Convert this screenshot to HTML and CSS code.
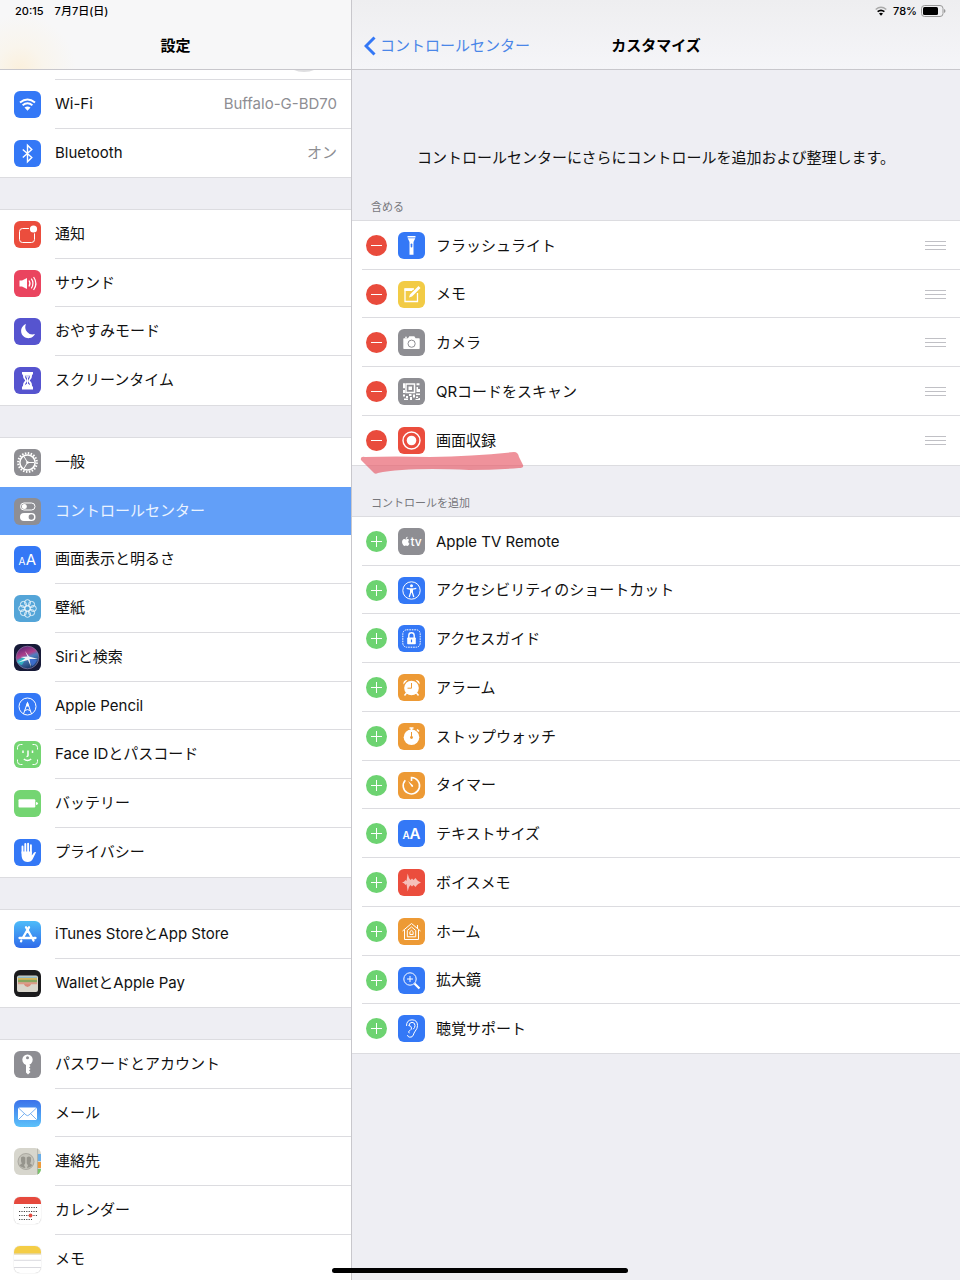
FILE: index.html
```html
<!DOCTYPE html>
<html lang="ja">
<head>
<meta charset="utf-8">
<meta name="viewport" content="width=device-width, initial-scale=1">
<title>設定</title>
<link rel="stylesheet" href="styles.css">
</head>
<body>
<div class="app">
  <div class="pane sidebar">
    <header class="bar bar-side">
      <div class="status"><span>20:15</span><span>7月7日(日)</span></div>
      <h1 class="bar-title">設定</h1>
    </header>
    <nav class="scroll" aria-label="設定">
      <div class="profile"><div class="profile-edge"><svg class="avatar-edge" viewBox="0 0 22 2" aria-hidden="true"><path d="M1 0h20q-4 2-10 2T1 0z"/></svg></div></div>
      <ul class="group first">
        <li class="row"><a class="link" href="#wifi"><svg class="icon blue" viewBox="0 0 27 27"><g class="ln w2"><path d="M6 11.500q7.500-6 15 0M8.600 14.200q4.900-3.800 9.800 0"/></g><path class="w" d="M10.500 16.500q3-2.200 6 0l-3 3.200z"/></svg><span class="body"><span>Wi-Fi</span><span class="value">Buffalo-G-BD70</span></span></a></li>
        <li class="row"><a class="link" href="#bluetooth"><svg class="icon blue" viewBox="0 0 27 27"><path class="ln" stroke-width="1.400" d="M8.800 9.500l9 8-4.300 4.300V5.200l4.300 4.300-9 8"/></svg><span class="body"><span>Bluetooth</span><span class="value">オン</span></span></a></li>
      </ul>
      <ul class="group">
        <li class="row"><a class="link" href="#notice"><svg class="icon red" viewBox="0 0 27 27"><rect class="ln" x="5.500" y="7.500" width="15" height="14" rx="3"/><circle cx="19.500" cy="8" r="4.600" fill="#eb4d3d"/><circle class="w" cx="19.500" cy="8" r="3.600"/></svg><span class="body">通知</span></a></li>
        <li class="row"><a class="link" href="#sound"><svg class="icon pink" viewBox="0 0 27 27"><path class="w" d="M5.500 10.500H8L13 8v11l-5-2.500H5.500z"/><path class="ln" stroke-width="1.200" d="M15 10.500q2 3 0 6M17.300 8.700q3.400 4.800 0 9.600M19.600 7q4.600 6.500 0 13"/></svg><span class="body">サウンド</span></a></li>
        <li class="row"><a class="link" href="#dnd"><svg class="icon violet" viewBox="0 0 27 27"><path class="w" d="M12 6a7.300 7.300 0 1 0 9 10A7.300 7.300 0 0 1 12 6z"/></svg><span class="body">おやすみモード</span></a></li>
        <li class="row"><a class="link" href="#screentime"><svg class="icon violet" viewBox="0 0 27 27"><path class="w" d="M8 5h11v2.500h-.800q0 4-2.400 6 2.400 2 2.400 6h.800V22.500H8v-3h.800q0-4 2.400-6-2.400-2-2.400-6H8z"/><path d="M10.800 8.700h5.400q-.300 2.800-2 4.500v1.500q1.500 1 2 3.500l-2-1.500h-1.400l-2 1.500q.500-2.500 2-3.500v-1.500q-1.700-1.700-2-4.500z" fill="#5654cf"/><path d="M11.300 9.200h4.400q-.500 1.300-2.200 1.800-1.700-.500-2.200-1.800zM13 11h1v7h-1z" class="w"/></svg><span class="body">スクリーンタイム</span></a></li>
      </ul>
      <ul class="group">
        <li class="row before-selected"><a class="link" href="#general"><svg class="icon gray" viewBox="0 0 27 27"><circle class="ln" cx="13.500" cy="13.500" r="9.300" stroke-width="2.200" stroke-dasharray="1.500 1.420"/><circle class="ln" cx="13.500" cy="13.500" r="7.600" stroke-width="1.500"/><path class="ln" d="M13.500 13.500H20M13.500 13.500L10 7.500M13.500 13.500L10 19.500"/><circle class="w" cx="13.500" cy="13.500" r="1.300"/></svg><span class="body">一般</span></a></li>
        <li class="row selected"><a class="link" href="#control" aria-current="page"><svg class="icon gray" viewBox="0 0 27 27"><rect class="ln" x="6.500" y="5" width="14.500" height="7" rx="3.500"/><circle class="w" cx="10.300" cy="8.500" r="2.500"/><rect class="w" x="6" y="15" width="15.500" height="8" rx="4"/><circle cx="17.300" cy="19" r="2.700" fill="#8e8e93"/></svg><span class="body">コントロールセンター</span></a></li>
        <li class="row"><a class="link" href="#display"><svg class="icon blue" viewBox="0 0 27 27"><text x="4.500" y="18.500" class="glyph-s">A</text><text x="11.800" y="18.500" class="glyph-l">A</text></svg><span class="body">画面表示と明るさ</span></a></li>
        <li class="row"><a class="link" href="#wallpaper"><svg class="icon sky" viewBox="0 0 27 27"><g class="ln thin"><circle cx="13.500" cy="13.500" r="2.600"/><circle cx="13.500" cy="7.700" r="3"/><circle cx="17.600" cy="9.400" r="3"/><circle cx="19.300" cy="13.500" r="3"/><circle cx="17.600" cy="17.600" r="3"/><circle cx="13.500" cy="19.300" r="3"/><circle cx="9.400" cy="17.600" r="3"/><circle cx="7.700" cy="13.500" r="3"/><circle cx="9.400" cy="9.400" r="3"/></g></svg><span class="body">壁紙</span></a></li>
        <li class="row"><a class="link" href="#siri"><svg class="icon siri" viewBox="0 0 27 27"><defs><linearGradient id="orb" x1="0.300" y1="0" x2="0.700" y2="1"><stop offset="0" stop-color="#5b2577"/><stop offset="0.350" stop-color="#b0408c"/><stop offset="0.500" stop-color="#4f7fc0"/><stop offset="1" stop-color="#15325e"/></linearGradient></defs><circle cx="13.500" cy="13.500" r="11.300" fill="url(#orb)" stroke="#8d7ba8" stroke-width=".7"/><path d="M3 17q5-4 10-4l-5 8q-4-1-5-4z" fill="#2cc0c6" opacity=".8"/><path d="M14 14l9 2q-2 5-5 6z" fill="#3f72d8" opacity=".8"/><path d="M13.500 12.500L11 7l4 5.500 9 2.500-8.500 0 1.500 8-3-7-10 2.500 7.500-4-5-1.500z" fill="#fff" opacity=".9"/></svg><span class="body">Siriと検索</span></a></li>
        <li class="row"><a class="link" href="#pencil"><svg class="icon blue" viewBox="0 0 27 27"><circle class="ln" cx="13.500" cy="13.500" r="8.500"/><path class="ln" d="M9.500 21l4-11.500 4 11.500M10.800 17.500q2.700-1.800 5.400 0"/><path class="w" d="M13.500 8.500l1.800 5h-3.600z"/></svg><span class="body">Apple Pencil</span></a></li>
        <li class="row"><a class="link" href="#faceid"><svg class="icon green" viewBox="0 0 27 27"><g class="ln"><path d="M3.500 8.500V6.500a3 3 0 0 1 3-3h2M18.500 3.500h2a3 3 0 0 1 3 3v2M23.500 18.500v2a3 3 0 0 1-3 3h-2M8.500 23.500h-2a3 3 0 0 1-3-3v-2"/><path d="M9 9.500V12M18.500 9.500V12M14 9.500v5q0 1-1.500 1M9.800 18q3.700 3 7.400 0" stroke-width="1.500"/></g></svg><span class="body">Face IDとパスコード</span></a></li>
        <li class="row"><a class="link" href="#battery"><svg class="icon green" viewBox="0 0 27 27"><rect class="w" x="4.500" y="9.300" width="16.800" height="8.200" rx="1"/><path class="w" d="M22 12q2 .300 2 1.500T22 15z"/></svg><span class="body">バッテリー</span></a></li>
        <li class="row"><a class="link" href="#privacy"><svg class="icon blue" viewBox="0 0 27 27"><g class="ln round" stroke-width="1.900"><path d="M8.500 14V7.500M11.300 13V5M14.100 13V4.600M16.900 14V6.300"/></g><path class="w" d="M7.550 12.500h10.300v4l2-2.800q1-1 2.200-.4l-3.300 6.700q-1.500 3-5 3-4 0-5.400-3-.800-2-.800-4z"/></svg><span class="body">プライバシー</span></a></li>
      </ul>
      <ul class="group">
        <li class="row"><a class="link" href="#store"><svg class="icon store" viewBox="0 0 27 27"><path class="ln round" stroke-width="2.300" d="M12 6.300l7.500 13.200M15 6.300L9 16.500M5.500 17h11M20 17h1.500M7.300 19.800l-.300.500"/></svg><span class="body">iTunes StoreとApp Store</span></a></li>
        <li class="row"><a class="link" href="#wallet"><svg class="icon black" viewBox="0 0 27 27"><rect x="3" y="5.500" width="21" height="16.500" rx="2" fill="#d9d6cc"/><path d="M4 6.500h19v2H4z" fill="#8fb9c4"/><path d="M4 8h19v3H4z" fill="#d8b458"/><path d="M4 9.800h19v3H4z" fill="#86a660"/><path d="M4 12.200h19v3H4z" fill="#dd9b88"/><path d="M4 14.200h6q1 2.800 3.500 2.800t3.500-2.800h6V21H4z" fill="#d9d6cc"/><path d="M10 14.200h7q-1 2.800-3.500 2.800T10 14.200z" fill="#d98a7a"/></svg><span class="body">WalletとApple Pay</span></a></li>
      </ul>
      <ul class="group">
        <li class="row"><a class="link" href="#passwords"><svg class="icon gray" viewBox="0 0 27 27"><circle class="w" cx="13.500" cy="8.700" r="5.200"/><path class="w" d="M12 12h3v1.500l1.500 1.500-1.500 1.500 1.500 1.500-1.500 1.500 1.500 1.500-2.500 2.500-2-2z"/><circle cx="13.500" cy="6.800" r="1.500" fill="#8e8e93"/></svg><span class="body">パスワードとアカウント</span></a></li>
        <li class="row"><a class="link" href="#mail"><svg class="icon mail" viewBox="0 0 27 27"><rect class="w" x="4" y="7.500" width="19" height="12.500" rx="1.500"/><path d="M4.500 8l7.500 7q1.500 1.300 3 0l7.500-7M4.500 19.500l6-6M22.500 19.500l-6-6" fill="none" stroke="#5b9fee" stroke-width=".8"/></svg><span class="body">メール</span></a></li>
        <li class="row"><a class="link" href="#contacts"><svg class="icon contacts" viewBox="0 0 27 27"><path d="M23.500 6H27v7h-3.500z" fill="#6aaee8"/><path d="M23.500 14H27v6h-3.500z" fill="#ee9a3a"/><path d="M23.500 21H27v6h-3.500z" fill="#76c567"/><path d="M23.600 0v27" stroke="#a9a9a0" stroke-width=".8"/><circle cx="12" cy="13.500" r="8" fill="#c5c4bb" stroke="#a1a098" stroke-width=".8"/><path d="M7 9.500q2-1.800 4.300 0v5.500q-.500 1.500-1.300 2l1.500 3Q7 19.500 5.500 17l2.300-1.200Q6.600 13 7 9.500zM12.700 9.500q2.300-1.800 4.300 0 .400 3.500-.800 6.300l2.300 1.200q-1.500 2.500-5.500 3l1-3q-1.300-.500-1.300-2z" fill="#96958d"/></svg><span class="body">連絡先</span></a></li>
        <li class="row"><a class="link" href="#calendar"><svg class="icon paper" viewBox="0 0 27 27"><path d="M0 0h27v7H0z" fill="#e6493d"/><g fill="none" stroke="#444" stroke-width="1" stroke-dasharray="1.200 1.200"><path d="M10 10.500h13M5 14.500h18M5 18.500h18M5 22.500h13"/></g><circle cx="16.500" cy="18.500" r="1.900" fill="#e6493d"/></svg><span class="body">カレンダー</span></a></li>
        <li class="row"><a class="link" href="#notes"><svg class="icon paper" viewBox="0 0 27 27"><path d="M0 0h27v7.500H0z" fill="#f4cd46"/><path d="M0 8h27" stroke="#cdb878" stroke-width=".8"/><path d="M0 14.300h27M0 21.500h27" stroke="#cfcfd6" stroke-width=".8"/></svg><span class="body">メモ</span></a></li>
      </ul>
    </nav>
  </div>

  <main class="pane detail">
    <header class="bar bar-main">
      <div class="status status-end">
        <svg class="st-wifi" viewBox="0 0 12 10" aria-label="Wi-Fi"><path d="M.700 3.500q5.300-4.500 10.600 0" fill="none" stroke="#aaa" stroke-width="1.500"/><path d="M2.600 5.700q3.400-2.800 6.800 0" fill="none" stroke="#000" stroke-width="1.600"/><path d="M4 7.500q2-1.500 4 0L6 9.700z"/></svg>
        <span>78%</span>
        <svg class="st-battery" viewBox="0 0 25 12" aria-label="バッテリー"><rect x=".500" y=".500" width="21.500" height="11" rx="3" fill="none" stroke="#999"/><rect x="2" y="2" width="15" height="8" rx="1.500"/><path d="M23 4q1.500.500 1.500 2T23 8z" fill="#999"/></svg>
      </div>
      <div class="nav">
        <a class="back" href="#control"><svg class="chevron" viewBox="0 0 12 20" aria-hidden="true"><path d="M10.500 1.500L2 10l8.500 8.500"/></svg>コントロールセンター</a>
        <h2 class="bar-title">カスタマイズ</h2>
      </div>
    </header>
    <div class="scroll">
      <p class="intro">コントロールセンターにさらにコントロールを追加および整理します。</p>
      <h3 class="label">含める</h3>
      <ul class="group controls">
        <li class="row"><button class="dot remove" aria-label="フラッシュライトを削除"></button><svg class="icon blue" viewBox="0 0 27 27"><path class="w" d="M9.500 4h8v1.500h-8zM9.700 6.300h7.600L15.500 10v12.800h-4V10z"/><rect x="12.700" y="11.500" width="1.600" height="4" rx=".8" fill="#3478f6"/></svg><span class="body">フラッシュライト</span><button class="grip" aria-label="並べ替え"></button></li>
        <li class="row"><button class="dot remove" aria-label="メモを削除"></button><svg class="icon yellow" viewBox="0 0 27 27"><path class="ln" stroke-width="1.300" d="M16 8H7v12.500h12.500V12"/><path class="w" d="M6.500 7.500h9l-1.500 2.500h-7.500zM20.500 5l2 2-8.500 8.500-3 1 1-3z"/></svg><span class="body">メモ</span><button class="grip" aria-label="並べ替え"></button></li>
        <li class="row"><button class="dot remove" aria-label="カメラを削除"></button><svg class="icon gray" viewBox="0 0 27 27"><path class="w" d="M6 9.300h4l1.300-2h5l1.300 2H21q.7 0 .7.700v9.200q0 .8-.7.800H6q-.7 0-.7-.8V10q0-.7.700-.7zM7 7.800h2v1H7z"/><circle cx="13.600" cy="14.700" r="3.600" fill="none" stroke="#8e8e93"/></svg><span class="body">カメラ</span><button class="grip" aria-label="並べ替え"></button></li>
        <li class="row"><button class="dot remove" aria-label="QRコードをスキャンを削除"></button><svg class="icon gray" viewBox="0 0 27 27"><g class="ln" stroke-width="1.500"><path d="M8 6h8.500v8.500H8z"/></g><path class="w" d="M10.500 8.500h3.500v3.500h-3.500zM5 5.200h2v5H5zM5 12h2v3H5zM18.500 5.200h3v2h-3zM18.500 9h1.500v2h2v3h-3.500zM5 16.500h2v2H5zM8 18h2v2H8zM6 20.500h4V22H6zM11 16h2.500v2H11zM12 19h2v3h-2zM15 16.500h2v3h-2zM18 15.500h4V17h-4zM18 18.500h2v1.500h-2zM20.500 20H22v2h-4.500v-1h3z"/></svg><span class="body">QRコードをスキャン</span><button class="grip" aria-label="並べ替え"></button></li>
        <li class="row marked"><button class="dot remove" aria-label="画面収録を削除"></button><svg class="icon red" viewBox="0 0 27 27"><circle class="ln" cx="13.500" cy="13.500" r="8.500" stroke-width="1.400"/><circle class="w" cx="13.500" cy="13.500" r="4.800"/></svg><span class="body">画面収録</span><button class="grip" aria-label="並べ替え"></button>
          <svg class="marker" viewBox="0 0 164 22" aria-hidden="true"><path d="M1 8Q0 4 5 5q30-1 65 0 45-1 84-5 4 0 5 5l4 8q1 3-4 3-25 2-50 2-40-2-67 0-15 1-24 3-3 2-5-1z"/></svg></li>
      </ul>
      <h3 class="label">コントロールを追加</h3>
      <ul class="group controls">
        <li class="row"><button class="dot add" aria-label="Apple TV Remoteを追加"></button><svg class="icon gray" viewBox="0 0 27 27"><path class="w" transform="translate(3.200 8.800) scale(.38)" d="M12.152 6.896c-.948 0-2.415-1.078-3.960-1.040-2.040.027-3.910 1.183-4.961 3.014-2.117 3.675-.546 9.103 1.519 12.090 1.013 1.454 2.208 3.090 3.792 3.039 1.520-.065 2.090-.987 3.935-.987 1.831 0 2.350.987 3.960.948 1.637-.026 2.676-1.480 3.676-2.948 1.156-1.688 1.636-3.325 1.662-3.415-.039-.013-3.182-1.221-3.220-4.857-.026-3.040 2.480-4.494 2.597-4.559-1.429-2.090-3.623-2.324-4.390-2.376-2-.156-3.675 1.090-4.610 1.090zM15.530 3.830c.843-1.012 1.400-2.427 1.245-3.830-1.207.052-2.662.805-3.532 1.818-.780.896-1.454 2.338-1.273 3.714 1.338.104 2.715-.688 3.559-1.701"/><text class="glyph-tv" x="12.500" y="17.800">tv</text></svg><span class="body">Apple TV Remote</span></li>
        <li class="row"><button class="dot add" aria-label="アクセシビリティのショートカットを追加"></button><svg class="icon blue" viewBox="0 0 27 27"><circle class="ln" cx="13.500" cy="13.500" r="8.700"/><circle class="w" cx="13.500" cy="8.700" r="1.500"/><path class="ln" stroke-width="1.300" d="M8.700 11.300l3.500.8h2.600l3.500-.8M12.700 12v3.500L11.200 20M14.300 12v3.500L15.800 20"/><path class="w" d="M12.100 11.500h2.800v4h-2.800z"/></svg><span class="body">アクセシビリティのショートカット</span></li>
        <li class="row"><button class="dot add" aria-label="アクセスガイドを追加"></button><svg class="icon blue" viewBox="0 0 27 27"><rect class="ln" x="4.800" y="4.800" width="17.400" height="17.400" rx="4" stroke-dasharray="1.600 .9"/><path class="ln" stroke-width="1.400" d="M10.800 13v-2.500a2.700 2.700 0 0 1 5.400 0V13"/><rect class="w" x="9.200" y="12.500" width="8.600" height="6.800" rx=".8"/><path d="M13.500 14.500v2.800" stroke="#3478f6" stroke-width="1.200"/></svg><span class="body">アクセスガイド</span></li>
        <li class="row"><button class="dot add" aria-label="アラームを追加"></button><svg class="icon orange" viewBox="0 0 27 27"><circle class="w" cx="13.500" cy="14" r="7.300"/><path class="w" d="M5.500 10.500q-1-4 4-4.700zM21.500 10.500q1-4-4-4.700z"/><path class="ln" stroke-width="1.500" d="M8.500 19l-2 2.500M18.500 19l2 2.500"/><path d="M13.500 9v5.200h-4" fill="none" stroke="#ed9a35"/></svg><span class="body">アラーム</span></li>
        <li class="row"><button class="dot add" aria-label="ストップウォッチを追加"></button><svg class="icon orange" viewBox="0 0 27 27"><circle class="w" cx="13.500" cy="14.300" r="7.800"/><path class="ln" stroke-width="1.700" d="M11.500 5h4M13.500 5v3M19 6.500l2 2"/><path d="M13.500 9v5" stroke="#ed9a35"/><circle cx="13.500" cy="14.500" r="1.400" fill="#ed9a35"/></svg><span class="body">ストップウォッチ</span></li>
        <li class="row"><button class="dot add" aria-label="タイマーを追加"></button><svg class="icon orange" viewBox="0 0 27 27"><path class="ln" stroke-width="1.600" d="M13.500 9V5.500A8.200 8.200 0 1 1 7.300 8.200"/><path class="w" d="M10 9l5 4.300q.7 1.500-.7 1.700-.7 0-1-.7z"/></svg><span class="body">タイマー</span></li>
        <li class="row"><button class="dot add" aria-label="テキストサイズを追加"></button><svg class="icon blue" viewBox="0 0 27 27"><text x="4.500" y="19" class="glyph-s bold">A</text><text x="11.500" y="19" class="glyph-l bold">A</text></svg><span class="body">テキストサイズ</span></li>
        <li class="row"><button class="dot add" aria-label="ボイスメモを追加"></button><svg class="icon red" viewBox="0 0 27 27"><path d="M4 13.500l2-.8 1.500-1.700 1 1 1.200-7.500 1.300 4.500 1.500 2 1.500-1.500 1.500 1.500 2-2 1.500 2 1.500 1.300 2.500 1.200-2.500 1.200-1.500 1.300-1.500 2-2-2-1.500 1.500-1.500-1.500-1.500 2-1.300 4.500-1.200-7.500-1 1-1.500-1.700z" fill="#f5c0ba"/></svg><span class="body">ボイスメモ</span></li>
        <li class="row"><button class="dot add" aria-label="ホームを追加"></button><svg class="icon orange" viewBox="0 0 27 27"><g class="ln"><path d="M4.500 13l9-7.500 9 7.500M19.500 10V7M6.500 12v9.500h14V12"/><path d="M9.300 18.800v-6.300l4.200-3.500 4.200 3.500v6.300z"/><path d="M11.900 16.500v-2.800l1.600-1.400 1.600 1.400v2.800z"/></g></svg><span class="body">ホーム</span></li>
        <li class="row"><button class="dot add" aria-label="拡大鏡を追加"></button><svg class="icon blue" viewBox="0 0 27 27"><circle class="ln" cx="12" cy="12" r="6.200"/><path class="ln" d="M12 9v6M9 12h6"/><path class="ln" stroke-width="2.200" d="M16.500 16.500l5 5"/></svg><span class="body">拡大鏡</span></li>
        <li class="row"><button class="dot add" aria-label="聴覚サポートを追加"></button><svg class="icon blue" viewBox="0 0 27 27"><path class="ln round" d="M8.500 10.500Q8.500 5 14 4.800q5.500.2 5.500 5.700 0 3-2.200 5.500-1.500 2-2 4-.8 2.500-3.500 2.200-2-.2-2.300-1.700M11 10.500q0-3 3-3.200 3 .2 3 3.200 0 2-1.500 3.500M11 10.500q2.500.5 2.500 2.500 0 1.500-1.500 2.500-2.500.8-1 2.500"/></svg><span class="body">聴覚サポート</span></li>
      </ul>
    </div>
  </main>
</div>
<div class="home-indicator"></div>
</body>
</html>
```
FILE: styles.css
```css
* { box-sizing: border-box; }

body {
  margin: 0;
  background: #eeeef3;
  color: #111;
  font: 15px/22px Inter, "Noto Sans CJK JP", sans-serif;
}

h1, h2, h3, p, ul { margin: 0; padding: 0; }
ul { list-style: none; }
a { color: inherit; text-decoration: none; }
button { padding: 0; border: 0; cursor: pointer; }

/* Split view */
.app {
  display: grid;
  grid-template-columns: 352px 1fr;
  height: 100vh;
}

.pane {
  display: flex;
  flex-direction: column;
  min-width: 0;
  min-height: 0;
}

.sidebar { border-right: 1px solid #c8c7cc; }

.scroll {
  flex: 1;
  min-height: 0;
  overflow: hidden;
}

/* Top bars */
.bar {
  flex: none;
  height: 70px;
  border-bottom: 1px solid #c8c7cc;
}

.bar-side { background: radial-gradient(circle at 20px 70px, #fbf0dc 0, #f9f5ed 24px, #f7f7f8 56px); }
.bar-main { background: linear-gradient(#eeeef0, #f5f5f8); }

.status {
  display: flex;
  align-items: center;
  gap: 11px;
  height: 22px;
  padding: 0 15px;
  font-size: 11px;
  font-weight: 500;
  color: #000;
}

.status-end {
  justify-content: flex-end;
  gap: 4px;
  padding-right: 14px;
}

.st-wifi { width: 12px; height: 10px; margin-right: 2px; }
.st-battery { width: 25px; height: 12px; }

.bar-title {
  font-size: 15px;
  line-height: 48px;
  font-weight: 700;
  text-align: center;
  color: #000;
}

.nav {
  display: grid;
  grid-template-columns: 1fr auto 1fr;
  align-items: center;
}

.back {
  display: flex;
  align-items: center;
  gap: 4px;
  padding-left: 12px;
  color: #4a86e8;
}

.chevron {
  width: 12px;
  height: 20px;
  fill: none;
  stroke: #3478f6;
  stroke-width: 3;
}

/* Lists */
.group {
  display: grid;
  grid-auto-rows: 49px 48px 49px 49px;
  background: #fff;
  box-shadow: 0 -1px #dcdce0, 0 1px #dcdce0;
}

.group + .group { margin-top: 33px; }
.first { box-shadow: 0 1px #dcdce0; }

.profile {
  padding-left: 55px;
  background: #fff;
}

.profile-edge {
  display: flex;
  justify-content: flex-end;
  height: 10px;
  padding-right: 36px;
  border-bottom: 1px solid #dcdce0;
}

.avatar-edge { width: 22px; height: 2px; fill: #dedee0; }

.link, .controls .row {
  display: flex;
  align-items: center;
  height: 100%;
}

.link { padding-left: 14px; gap: 14px; }

.body {
  display: flex;
  flex: 1;
  align-items: center;
  justify-content: space-between;
  align-self: stretch;
  padding-right: 14px;
  border-bottom: 1px solid #dcdce0;
  white-space: nowrap;
}

.row:last-child .body,
.before-selected .body,
.selected .body { border-bottom-color: transparent; }

.value { color: #8e8e93; }

.selected { background: #629ff8; color: #eaf3ff; }

.intro {
  padding-top: 77px;
  text-align: center;
}

.label {
  padding: 30px 19px 6px;
  font-size: 11px;
  line-height: 16px;
  font-weight: 400;
  color: #77777c;
}

.controls .row {
  position: relative;
  padding: 0 14px;
  gap: 11px;
}

.controls .row:not(:last-child)::after {
  content: "";
  position: absolute;
  right: 0;
  bottom: 0;
  left: 10px;
  border-bottom: 1px solid #dcdce0;
}

.controls .body { border: 0; }

.dot {
  flex: none;
  width: 21px;
  height: 21px;
  border-radius: 50%;
  background-repeat: no-repeat;
  background-position: center;
}

.remove {
  background-color: #e94b3c;
  background-image: linear-gradient(#fff, #fff);
  background-size: 11px 1px;
}

.add {
  background-color: #6dd371;
  background-image: linear-gradient(#fff, #fff), linear-gradient(#fff, #fff);
  background-size: 11px 1px, 1px 11px;
}

.grip {
  width: 21px;
  height: 9px;
  background: repeating-linear-gradient(#c0c0c5 0 1px, transparent 1px 4px);
}

.marker {
  position: absolute;
  left: 8px;
  bottom: -9px;
  z-index: 1;
  width: 164px;
  height: 22px;
  fill: #e8606c;
  opacity: .68;
}

/* Icons */
.icon {
  flex: none;
  width: 27px;
  height: 27px;
  border-radius: 6px;
}

.blue { background: #3478f6; }
.red { background: #eb4d3d; }
.pink { background: #ea445f; }
.violet { background: #5654cf; }
.gray { background: #8e8e93; }
.sky { background: #54a5d8; }
.green { background: #74d572; }
.orange { background: #ed9a35; }
.yellow { background: #f2cb45; }
.black { background: #1b1b1d; }
.siri { background: #171a38; }
.store { background: linear-gradient(#4ebcf9, #2f6bea); }
.mail { background: linear-gradient(#3b72ea, #5cc2fa); }
.contacts { background: #d7d6cd; }
.paper { background: #fff; box-shadow: 0 0 1px #aaa; }

.w { fill: #fff; }
.ln { fill: none; stroke: #fff; }
.w2 { stroke-width: 2; }
.thin { stroke-width: .8; }
.round { stroke-linecap: round; stroke-linejoin: round; }

.glyph-s, .glyph-l, .glyph-tv {
  fill: #fff;
  font-family: Inter, sans-serif;
}

.glyph-s { font-size: 10px; }
.glyph-l { font-size: 15px; }
.glyph-tv { font-size: 12px; font-weight: 500; }
.bold { font-weight: 600; }

.home-indicator {
  position: fixed;
  bottom: 7px;
  left: 50%;
  z-index: 2;
  width: 296px;
  height: 5px;
  border-radius: 3px;
  background: #000;
  transform: translateX(-50%);
}
```
